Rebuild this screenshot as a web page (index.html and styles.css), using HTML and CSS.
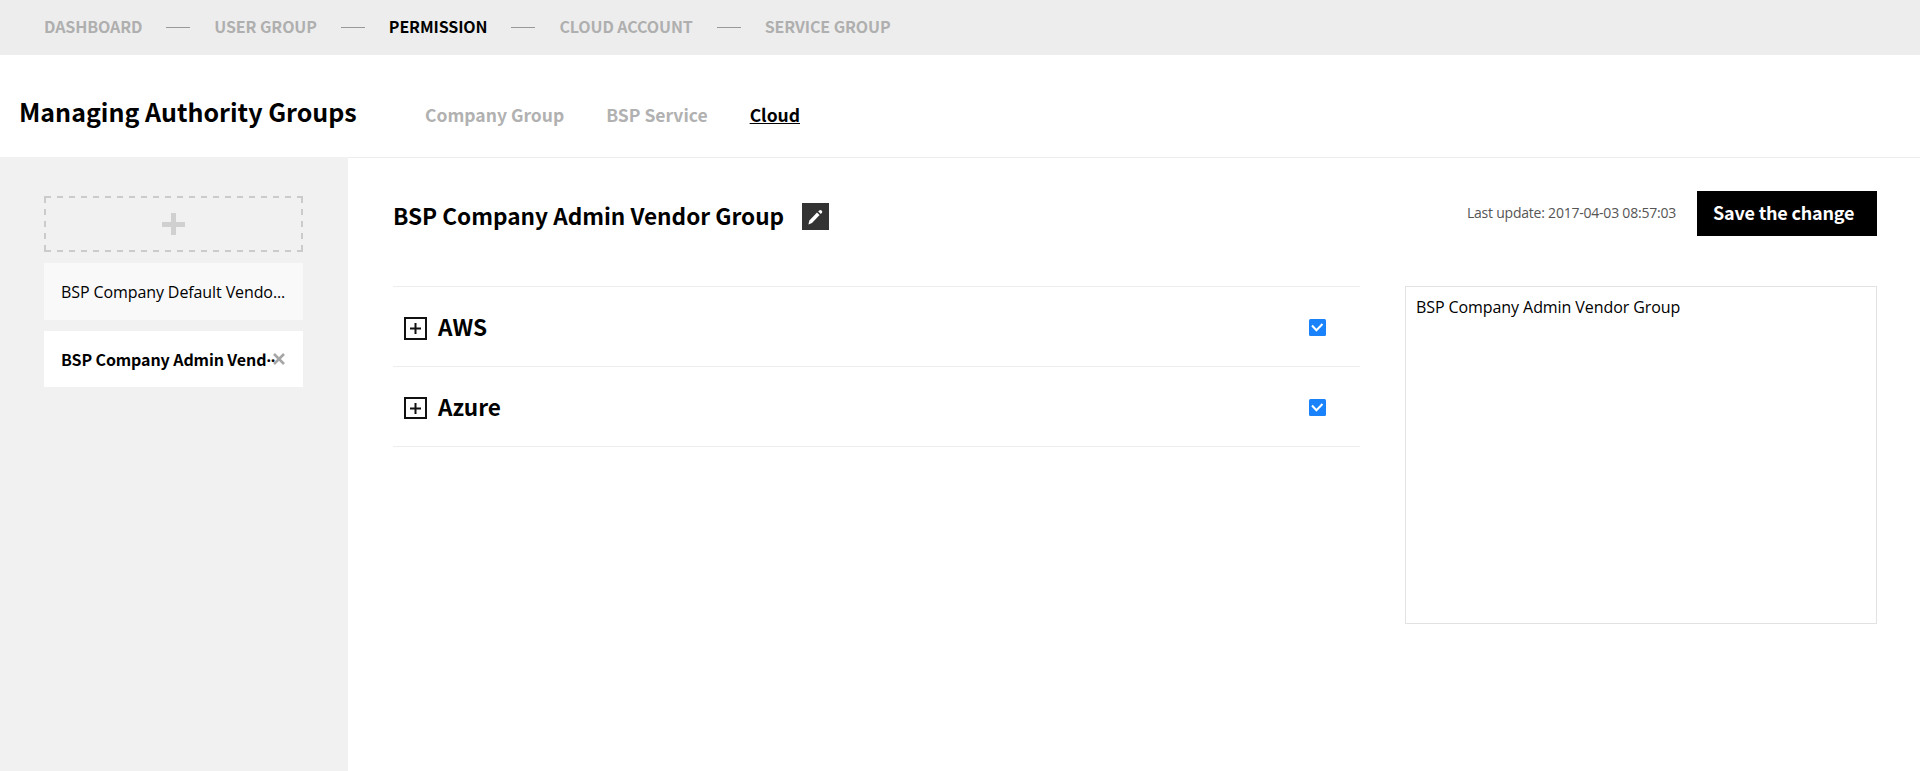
FILE: index.html
```html
<!DOCTYPE html>
<html lang="en">
<head>
<meta charset="utf-8">
<title>Managing Authority Groups</title>
<link rel="stylesheet" href="styles.css">
</head>
<body>
<nav class="topnav">
  <a class="nav-item">DASHBOARD</a><i class="dash"></i>
  <a class="nav-item">USER GROUP</a><i class="dash"></i>
  <a class="nav-item active">PERMISSION</a><i class="dash"></i>
  <a class="nav-item">CLOUD ACCOUNT</a><i class="dash"></i>
  <a class="nav-item">SERVICE GROUP</a>
</nav>
<header class="header">
  <h1 class="title">Managing Authority Groups</h1>
  <div class="tabs">
    <a class="tab">Company Group</a>
    <a class="tab">BSP Service</a>
    <a class="tab active">Cloud</a>
  </div>
</header>
<div class="body">
  <aside class="sidebar">
    <div class="add">
      <svg class="add-frame" width="259" height="56" viewBox="0 0 259 56" fill="none" stroke="#cbcbcb" stroke-width="2">
        <path stroke-dasharray="6 6" d="M1 1H258M1 55H258"/>
        <path stroke-dasharray="6 6" d="M1 1V56M258 1V56"/>
        <path d="M253 1H258V7M253 55H258V50M0 55H7M1 55V49M1 0V7"/>
        <path stroke="none" fill="#d0d0d0" d="M118 26H127V17H132V26H141V31H132V39H127V31H118Z"/>
      </svg>
    </div>
    <div class="group"><span class="group-name">BSP Company Default Vendo...</span></div>
    <div class="group selected"><span class="group-name">BSP Company Admin Vend<span class="more">··</span></span>
      <svg class="close" width="12" height="12" viewBox="0 0 12 12" stroke="#a6a6a6" stroke-width="2.6"><path d="M1 1L11 11M11 1L1 11"/></svg>
    </div>
  </aside>
  <main class="main">
    <div class="main-head">
      <h2 class="group-title">BSP Company Admin Vendor Group</h2>
      <button class="edit" aria-label="Edit">
        <svg width="27" height="27" viewBox="0 0 27 27" fill="#fff"><path d="M6.4 21.4L7.4 17.6L15 9.4L17.6 11.9L10 19.9Z"/><path d="M16.2 8.4L17.2 7.4Q18.4 6.4 19.6 7.4Q20.8 8.6 20 9.8L18.8 11Z"/></svg>
      </button>
      <span class="updated">Last update: 2017-04-03 08:57:03</span>
      <button class="save">Save the change</button>
    </div>
    <div class="content">
      <div class="providers">
        <div class="provider">
          <svg class="expand" width="23" height="23" viewBox="0 0 23 23" fill="none" stroke="#111" stroke-width="2"><path d="M1 1H22V22H1Z"/><path d="M6 11.5H17M11.5 6V17"/></svg>
          <span class="provider-name">AWS</span>
          <svg class="check" width="17" height="17" viewBox="0 0 17 17"><rect width="17" height="17" rx="1.5" fill="#1a82fb"/><path d="M3 6.5L7.4 11.2L13.5 5" fill="none" stroke="#fff" stroke-width="2"/></svg>
        </div>
        <div class="provider">
          <svg class="expand" width="23" height="22" viewBox="0 0 23 22" fill="none" stroke="#111" stroke-width="2"><path d="M1 1H22V21H1Z"/><path d="M6 11.5H17M11.5 6V17"/></svg>
          <span class="provider-name">Azure</span>
          <svg class="check" width="17" height="17" viewBox="0 0 17 17"><rect width="17" height="17" rx="1.5" fill="#1a82fb"/><path d="M3 6.5L7.4 11.2L13.5 5" fill="none" stroke="#fff" stroke-width="2"/></svg>
        </div>
      </div>
      <div class="description">BSP Company Admin Vendor Group</div>
    </div>
  </main>
</div>
</body>
</html>
```
FILE: styles.css
```css
* { box-sizing: border-box; }
body {
  margin: 0;
  height: 771px;
  overflow: hidden;
  display: flex;
  flex-direction: column;
  background: #fff;
  color: #000;
  font-family: "Noto Sans CJK KR", sans-serif;
  white-space: nowrap;
}
h1, h2 { margin: 0; }
button { border: 0; padding: 0; font-family: inherit; }
svg { display: block; flex: none; }
.topnav {
  height: 55px;
  flex: none;
  padding-left: 44px;
  display: flex;
  align-items: center;
  gap: 24px;
  background: #ededed;
}
.nav-item {
  padding-bottom: 3px;
  font-size: 16px;
  line-height: 24px;
  font-weight: 700;
  letter-spacing: -0.1px;
  color: #afafaf;
}
.nav-item.active { color: #000; }
.dash { width: 24px; height: 1px; background: #999; }
.header {
  height: 103px;
  flex: none;
  padding: 36px 0 0 19px;
  display: flex;
  gap: 68px;
  border-bottom: 1px solid #ededed;
}
.title { width: 338px; font-size: 25px; line-height: 40px; font-weight: 700; }
.tabs { display: flex; gap: 42px; padding-top: 11px; }
.tab { font-size: 17.5px; line-height: 26px; font-weight: 700; color: #b1b1b1; }
.tab.active { color: #000; text-decoration: underline; }
.body { flex: 1; display: flex; }
.sidebar {
  width: 348px;
  margin-top: -1px;
  padding: 39px 45px 0 44px;
  display: flex;
  flex-direction: column;
  gap: 11px;
  background: #f1f1f1;
}
.add { height: 56px; }
.group {
  height: 57px;
  padding: 0 17px;
  display: flex;
  align-items: center;
  background: #f9f9f9;
  font: 16px "Open Sans", sans-serif;
  letter-spacing: -0.1px;
}
.group.selected {
  height: 56px;
  background: #fff;
  font: 700 16px "Noto Sans CJK KR", sans-serif;
  letter-spacing: -0.1px;
}
.more { font-family: "Open Sans", sans-serif; }
.close { margin-left: -2px; }
.main { flex: 1; padding: 33px 43px 0 45px; }
.main-head { height: 95px; display: flex; align-items: flex-start; }
.group-title { width: 391px; margin-top: 8px; font-size: 22.6px; line-height: 34px; font-weight: 700; }
.edit { width: 27px; height: 27px; margin: 12px 0 0 18px; background: #333; }
.updated { margin: 11px 21px 0 auto; font: 14px/22px "Open Sans", sans-serif; letter-spacing: -0.22px; color: #555; }
.save {
  width: 180px;
  height: 45px;
  padding: 0 0 4px 16px;
  text-align: left;
  background: #000;
  color: #fff;
  font-size: 18px;
  font-weight: 700;
  letter-spacing: -0.2px;
}
.content { display: flex; gap: 45px; align-items: flex-start; }
.providers { width: 967px; border-top: 1px solid #ededed; }
.provider {
  height: 80px;
  padding: 0 34px 0 11px;
  display: flex;
  align-items: center;
  border-bottom: 1px solid #ededed;
}
.expand { margin: 3px 11px 0 0; }
.provider-name { font-size: 22.6px; line-height: 34px; font-weight: 700; }
.check { margin: 2px 0 0 auto; }
.description {
  width: 472px;
  height: 338px;
  padding: 8px 10px;
  border: 1px solid #e2e2e2;
  font: 16px/24px "Open Sans", sans-serif;
  letter-spacing: -0.08px;
}
```
